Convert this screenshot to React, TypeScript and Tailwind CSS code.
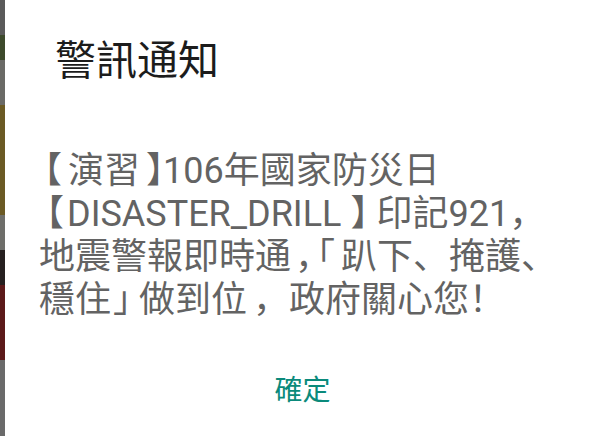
import React from 'react';

const strip = [
  { h: 'h-[35px]', c: 'bg-[#5a5a5a]' },
  { h: 'h-[25px]', c: 'bg-[#3d4a2c]' },
  { h: 'h-[45px]', c: 'bg-[#6a6a66]' },
  { h: 'h-[110px]', c: 'bg-[#6b5a24]' },
  { h: 'h-[35px]', c: 'bg-[#6e6e6a]' },
  { h: 'h-[35px]', c: 'bg-[#262020]' },
  { h: 'h-[75px]', c: 'bg-[#5c1a1a]' },
  { h: 'h-[76px]', c: 'bg-[#6a6a6a]' },
];

export default function App() {
  return (
    <div
      className="flex w-[600px] h-[436px] overflow-hidden bg-white"
      style={{ fontFamily: 'Roboto, "Noto Sans CJK SC", sans-serif' }}
    >
      <div className="flex flex-col w-[5px] shrink-0">
        {strip.map((s, i) => (
          <div key={i} className={`${s.h} ${s.c}`} />
        ))}
      </div>

      <div className="flex-1 flex flex-col bg-white">
        <h1 className="ml-[50px] mt-[33px] text-[41px] leading-[56px] text-[#1c1c1c] font-normal">
          警訊通知
        </h1>

        <p className="ml-[34px] mt-[61px] text-[36px] leading-[43px] text-[#636363] whitespace-nowrap">
          <span className="-ml-[13px] mr-[6px]">【</span>演習<span className="ml-[6px] -mr-[19px]">】</span>106年國家防災日
          <br />
          <span className="-ml-[11px] mr-[3px]">【</span>DISASTER_DRILL<span className="ml-[9px] -mr-[10px]">】</span>印記921，
          <br />
          地震警報即時通<span className="ml-[4px] -mr-[14px]">，</span><span className="mr-[6px]">「</span>趴下、掩護、
          <br />
          穩住<span className="ml-[2px] -mr-[10px]">」</span>做到位<span className="ml-[6px]">，</span>政府關心您！
        </p>

        <div className="flex justify-center mt-[49px]">
          <button className="px-4 text-[28px] leading-[40px] text-[#0b8a7b]">確定</button>
        </div>
      </div>
    </div>
  );
}
